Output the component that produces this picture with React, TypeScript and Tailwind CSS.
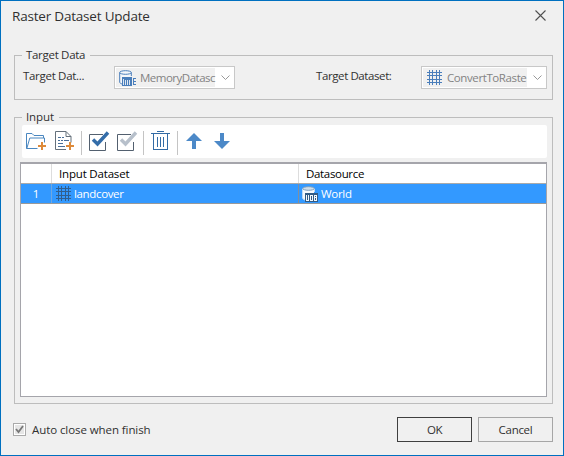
import React from "react";

function GridIcon({ className, color }: { className: string; color: string }) {
  return (
    <svg className={className} width="15" height="15" viewBox="0 0 15 15" shapeRendering="crispEdges">
      <path d="M2.5 0v15M5.5 0v15M9.5 0v15M12.5 0v15M0 2.5h15M0 5.5h15M0 9.5h15M0 12.5h15" stroke={color} fill="none" />
    </svg>
  );
}

function DatabaseIcon({ className, kind }: { className: string; kind: "memory" | "udb" }) {
  const udb = kind === "udb";
  return (
    <svg className={className} width="17" height="16" viewBox="0 0 17 16">
      <path d="M1 2.5v9.5c0 1 1 1.8 3 2V7h8V2.5z" fill={udb ? "#f4f8fc" : "#f5f7fa"} />
      <path d="M.7 2.5v9.5c0 1 1 1.8 2.8 2M12.3 2.5V6" stroke={udb ? "#dce9f5" : "#4a7ebb"} fill="none" />
      <ellipse cx="6.5" cy="2.5" rx="5.8" ry="1.8" fill={udb ? "#cfdeeb" : "#f5f7fa"} stroke={udb ? "#7f9fbd" : "#4a7ebb"} />
      {udb ? (
        <g shapeRendering="crispEdges">
          <path d="M3 7h13v9H3z" fill="#315b85" />
          <path d="M4 9h1v6h-1zM6 9h1v6h-1zM5 14h1v1h-1zM8 9h3v1H8zM8 14h3v1H8zM8 9h1v6H8zM10 9h1v6h-1zM12 9h3v1h-3zM12 14h3v1h-3zM12 9h1v6h-1zM14 9h1v6h-1zM13 11h1v1h-1z" fill="#f4f8fc" />
        </g>
      ) : (
        <g shapeRendering="crispEdges">
          <path d="M3 7h10v9H3z" fill="#4a7ebb" />
          <path d="M4.500 9v6M6.500 10v5M8.500 10v5M10.500 10v5" stroke="#dce6f1" />
          <path d="M17 8.500h-2.500v6h2.500M14.500 11.500h2" stroke="#4a7ebb" fill="none" />
        </g>
      )}
    </svg>
  );
}

function FolderAddIcon() {
  return (
    <svg className="ml-1" width="20" height="20" viewBox="0 0 20 20" fill="none">
      <path d="M.5 17.500V2.500h5.500l2 2h9.500v2.500M.8 17.500l3-10.500h14.700v4.500M.5 17.500H11.500" stroke="#4a87c0" />
      <path d="M16 11v8M12 15h8" stroke="#dd8a3a" strokeWidth="2" />
    </svg>
  );
}

function FileAddIcon() {
  return (
    <svg className="ml-[9px]" width="20" height="20" viewBox="0 0 20 20" fill="none">
      <path d="M11 18.500H.5V.5H11l5 5v6M11 .5v5h5" stroke="#65707b" />
      <path d="M3 6.500h3M7 6.500h2M3 9.500h2M6 9.500h2M9 9.500h5M3 12.500h5M3 15.500h7" stroke="#4a6f98" />
      <path d="M15 11v8M11 15h8" stroke="#dd8a3a" strokeWidth="2" />
    </svg>
  );
}

function CheckIcon({ className, color }: { className: string; color: string }) {
  return (
    <svg className={className} width="21" height="21" viewBox="0 0 21 21" fill="none">
      <path d="M14 3.500H.5v16h16V11" stroke="#53606f" />
      <path d="M4 8.500l4.500 4.500L19 1.500" stroke={color} strokeWidth="3.400" />
    </svg>
  );
}

function TrashIcon() {
  return (
    <svg className="ml-[7px]" width="19" height="20" viewBox="0 0 19 20" fill="none" stroke="#336ba5" shapeRendering="crispEdges">
      <path d="M6 .5h7M0 2.500h19M2.500 3v15.500h14V3M6.500 5.500v10M9.500 5.500v10M12.500 5.500v10" />
    </svg>
  );
}

function ArrowIcon({ className, down }: { className: string; down?: boolean }) {
  return (
    <svg className={className} width="16" height="18" viewBox="0 0 16 18">
      <path d={down ? "M6 1h4v8h6l-8 8-8-8h6z" : "M8 1l8 8h-6v8H6V9H0z"} fill="#4c89c8" />
    </svg>
  );
}

function Legend({ children, className }: { children: React.ReactNode; className: string }) {
  return <div className={`absolute left-[7px] bg-[#f0f0f0] pl-1 leading-4 whitespace-nowrap ${className}`}>{children}</div>;
}

function Combo({ className, icon, text, textClass }: { className: string; icon: React.ReactNode; text: string; textClass: string }) {
  return (
    <div className={`flex h-[23px] border border-[#c8c8c8] bg-white p-px ${className}`}>
      <div className="flex min-w-0 flex-1 items-center bg-[#f0f0f0]">
        {icon}
        <span className={`whitespace-nowrap leading-4 text-[#838383] ${textClass}`}>{text}</span>
      </div>
      <svg className="mt-[7px] mr-[3px] ml-[6px] shrink-0" width="9" height="6" viewBox="0 0 9 6" fill="none">
        <path d="M.5 .5l4 4 4-4" stroke="#999" />
      </svg>
    </div>
  );
}

export default function App() {
  return (
    <div className="flex h-[456px] w-[564px] flex-col overflow-hidden border border-[#0070c0] bg-[#f0f0f0] font-['Open_Sans','Noto_Sans',sans-serif] text-[11.5px] text-[#303030]">
      <header className="flex h-[54px] justify-between">
        <h1 className="mt-[5px] ml-[11px] text-[13.5px] leading-5 tracking-[-0.2px]">Raster Dataset Update</h1>
        <svg className="mt-[9px] mr-[17px]" width="11" height="11" viewBox="0 0 11 11">
          <path d="M.5 .5l10 10M10.500 .5l-10 10" stroke="#505050" strokeWidth="1.1" />
        </svg>
      </header>

      <section className="relative ml-[13px] flex h-[45px] w-[539px] border border-[#bdbdbd]">
        <Legend className="-top-[9px] w-[68px] tracking-[-0.3px]">Target Data</Legend>
        <span className="mt-3 ml-2 w-[91px] leading-4 tracking-[-0.3px]">Target Dat...</span>
        <Combo className="mt-[10px] w-[121px]" icon={<DatabaseIcon className="ml-[3px] shrink-0" kind="memory" />} text="MemoryDatasc" textClass="ml-1 tracking-[-0.5px]" />
        <span className="mt-3 ml-[81px] w-[105px] leading-4 tracking-[-0.4px]">Target Dataset:</span>
        <Combo className="mt-[10px] w-[126px]" icon={<GridIcon className="ml-1 shrink-0" color="#4a7ebb" />} text="ConvertToRaste" textClass="ml-[5px] tracking-[-0.4px]" />
      </section>

      <section className="relative mt-[17px] ml-[13px] flex h-[287px] w-[539px] flex-col border border-[#bdbdbd]">
        <Legend className="-top-[9px] w-[37px] tracking-[-0.1px]">Input</Legend>
        <div className="mt-[7px] ml-[7px] flex h-[33px] w-[525px] items-start rounded-[2px] bg-white pt-[6px]">
          <FolderAddIcon />
          <FileAddIcon />
          <i className="ml-[6px] h-6 w-px bg-[#c4c4c4]" />
          <CheckIcon className="ml-[7px]" color="#346da9" />
          <CheckIcon className="ml-[7px]" color="#b7c0cb" />
          <i className="ml-[5px] h-6 w-px bg-[#c4c4c4]" />
          <TrashIcon />
          <i className="ml-[7px] h-6 w-px bg-[#c4c4c4]" />
          <ArrowIcon className="mt-px ml-2" />
          <ArrowIcon className="mt-px ml-3" down />
        </div>
        <div className="mt-1 ml-[5px] flex h-[235px] w-[527px] flex-col border border-t-2 border-[#a5a5ab] bg-white">
          <div className="flex h-5 border-b border-[#aaa] leading-5 text-black">
            <div className="w-[31px] border-r border-[#ddd]" />
            <div className="w-[247px] border-r border-[#ddd] pl-[7px] tracking-[-0.18px]">Input Dataset</div>
            <div className="flex-1 pl-[7px] tracking-[-0.33px]">Datasource</div>
          </div>
          <div className="flex h-5 items-center border-b border-[#999] bg-[#3399ff] text-white">
            <div className="h-full w-[31px] border-r border-[#70a7df] text-center leading-5">1</div>
            <div className="flex h-full w-[247px] items-center border-r border-[#808fa0]">
              <GridIcon className="ml-1" color="#315f8e" />
              <span className="ml-[3px] tracking-[-0.35px]">landcover</span>
            </div>
            <DatabaseIcon className="ml-[3px]" kind="udb" />
            <span className="ml-[2px] tracking-[-0.3px]">World</span>
          </div>
        </div>
      </section>

      <footer className="flex h-[51px] items-start">
        <div className="mt-[19px] ml-3 flex h-[13px] w-[13px] items-center justify-center border border-[#aaa] bg-white p-px">
          <svg width="9" height="9" viewBox="0 0 9 9" className="bg-[#e6e6e6]">
            <path d="M1 4l2.500 3L8 1" stroke="#777" strokeWidth="1.8" fill="none" />
          </svg>
        </div>
        <span className="mt-[18px] ml-[6px] w-[365px] leading-4 tracking-[-0.08px]">Auto close when finish</span>
        <button className="mt-[13px] h-[25px] w-[75px] shrink-0 border border-[#3f3f3f] text-center leading-[23px] tracking-[-0.5px]">OK</button>
        <button className="mt-[13px] ml-[6px] h-[25px] w-[75px] shrink-0 border border-[#a6a6a6] text-center leading-[23px] tracking-[-0.3px]">Cancel</button>
      </footer>
    </div>
  );
}
